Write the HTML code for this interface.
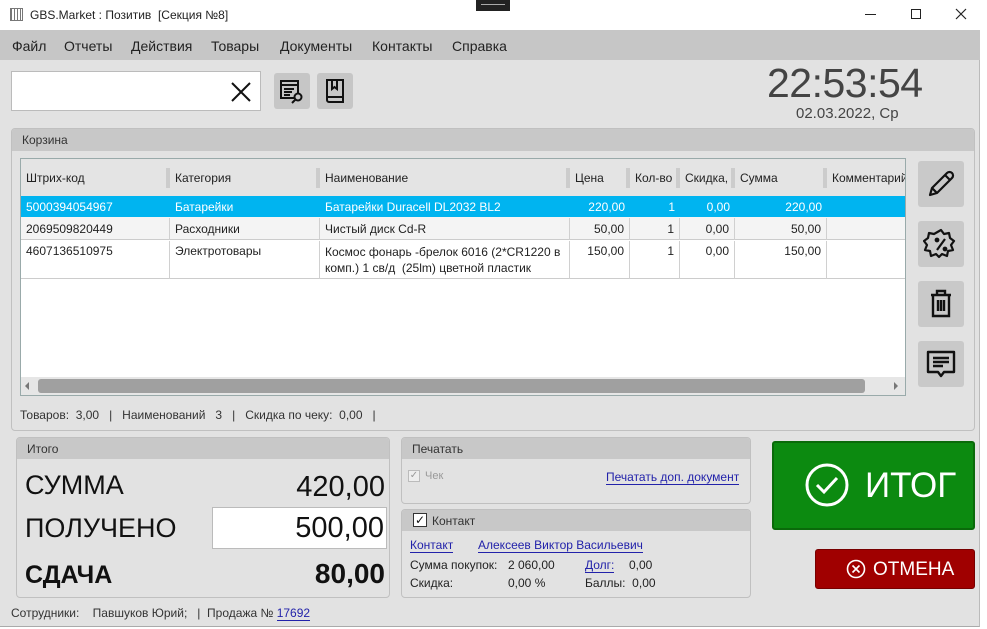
<!DOCTYPE html>
<html><head><meta charset="utf-8"><style>
*{margin:0;padding:0;box-sizing:border-box}
body{width:987px;height:629px;overflow:hidden;background:#fff;font-family:"Liberation Sans","DejaVu Sans",sans-serif;font-size:12px;color:#222;position:relative}
.a{position:absolute}
.t{white-space:nowrap}
.hdr{background:#c8c8c8;border-radius:3px 3px 0 0;padding:4px 10px;font-size:12px;color:#333}
.grp{background:#e2e2e2;border:1px solid #c0c0c0;border-radius:4px}
.cell{position:absolute;border-right:1px solid #d0d0d0;padding:3px 5px;white-space:nowrap;overflow:hidden}
.sbtn{position:absolute;left:918px;width:46px;height:46px;background:#c9c9c9;border-radius:3px}
.lnk{color:#2222aa;text-decoration:none;border-bottom:1px solid #2222aa}
.m{position:absolute;top:38px;font-size:14px;color:#222;white-space:nowrap}
</style></head><body>
<div class="a" style="left:0;top:0;width:987px;height:30px;background:#fff"></div>
<div class="a" style="left:10px;top:8px;width:13px;height:13px;border:1px solid #777;background:repeating-linear-gradient(90deg,#777 0 1px,#fff 1px 3px)"></div>
<div class="a t" style="left:30px;top:8px;font-size:12px;color:#222">GBS.Market : Позитив &nbsp;[Секция №8]</div>
<div class="a" style="left:476px;top:0;width:34px;height:11px;background:#222"></div>
<div class="a" style="left:481px;top:4px;width:24px;height:1px;background:#aaa"></div>
<div class="a" style="left:865px;top:14px;width:11px;height:1px;background:#222"></div>
<div class="a" style="left:911px;top:9px;width:10px;height:10px;border:1px solid #222"></div>
<svg class="a" style="left:955px;top:8px" width="12" height="12"><path d="M1 1L11 11M11 1L1 11" stroke="#222" stroke-width="1.2"/></svg>
<div class="a" style="left:0;top:30px;width:980px;height:30px;background:#c6c6c6"></div>
<div class="m" style="left:12px">Файл</div>
<div class="m" style="left:64px">Отчеты</div>
<div class="m" style="left:131px">Действия</div>
<div class="m" style="left:211px">Товары</div>
<div class="m" style="left:280px">Документы</div>
<div class="m" style="left:372px">Контакты</div>
<div class="m" style="left:452px">Справка</div>
<div class="a" style="left:0;top:60px;width:980px;height:567px;background:#e2e2e2;border-right:1px solid #bbb;border-bottom:1px solid #aaa"></div>
<div class="a" style="left:11px;top:71px;width:250px;height:40px;background:#fff;border:1px solid #bbb"></div>
<svg class="a" style="left:229px;top:80px" width="24" height="24"><path d="M3 3L21 21M21 3L3 21" stroke="#111" stroke-width="2"/></svg>
<div class="a" style="left:274px;top:73px;width:36px;height:36px;background:#c6c6c6;border-radius:3px"></div>
<svg class="a" style="left:278px;top:77px" width="28" height="28" fill="none" stroke="#111" stroke-width="2"><rect x="3" y="4" width="17" height="17"/><path d="M3 8h17M6 12h10M6 15h8M6 18h6"/><circle cx="20" cy="20" r="3.5" fill="#c6c6c6"/><path d="M17.5 22.5L14 26"/></svg>
<div class="a" style="left:317px;top:73px;width:36px;height:36px;background:#c6c6c6;border-radius:3px"></div>
<svg class="a" style="left:321px;top:77px" width="28" height="28" fill="none" stroke="#111" stroke-width="2"><path d="M6 3h16v22H8a2 2 0 0 1-2-2z"/><path d="M6 20h16M11 3v9l2.5-2 2.5 2V3"/></svg>
<div class="a t" style="left:767px;top:60px;font-size:41px;color:#444;letter-spacing:-0.5px">22:53:54</div>
<div class="a t" style="left:796px;top:105px;font-size:15px;color:#444">02.03.2022, Ср</div>
<div class="a grp" style="left:11px;top:128px;width:964px;height:303px"></div>
<div class="a hdr" style="left:12px;top:129px;width:962px;height:22px">Корзина</div>
<div class="a" style="left:20px;top:158px;width:886px;height:238px;background:#fff;border:1px solid #9aa;"></div>
<div class="a" style="left:21px;top:159px;width:884px;height:37px;background:#e4e4e4"></div>
<div class="a" style="left:21px;top:196px;width:884px;height:21px;background:#00b4f0"></div>
<div class="a" style="left:21px;top:217px;width:884px;height:23px;background:#f4f4f4;border-bottom:1px solid #ccc"></div>
<div class="a" style="left:21px;top:240px;width:884px;height:39px;border-bottom:1px solid #ccc"></div>
<div class="cell" style="left:21px;top:168px;width:149px;border-right:4px solid #ccc">Штрих-код</div>
<div class="cell" style="left:170px;top:168px;width:150px;border-right:4px solid #ccc">Категория</div>
<div class="cell" style="left:320px;top:168px;width:250px;border-right:4px solid #ccc">Наименование</div>
<div class="cell" style="left:570px;top:168px;width:60px;border-right:4px solid #ccc">Цена</div>
<div class="cell" style="left:630px;top:168px;width:50px;border-right:4px solid #ccc">Кол-во</div>
<div class="cell" style="left:680px;top:168px;width:55px;border-right:4px solid #ccc">Скидка,</div>
<div class="cell" style="left:735px;top:168px;width:92px;border-right:4px solid #ccc">Сумма</div>
<div class="cell" style="left:827px;top:168px;width:78px;border:none">Комментарий</div>
<div style="color:#fff">
<div class="cell" style="left:21px;top:197px;width:149px;border:none">5000394054967</div>
<div class="cell" style="left:170px;top:197px;width:150px;border:none">Батарейки</div>
<div class="cell" style="left:320px;top:197px;width:250px;border:none">Батарейки Duracell DL2032 BL2</div>
<div class="cell" style="left:570px;top:197px;width:60px;border:none;text-align:right">220,00</div>
<div class="cell" style="left:630px;top:197px;width:50px;border:none;text-align:right">1</div>
<div class="cell" style="left:680px;top:197px;width:55px;border:none;text-align:right">0,00</div>
<div class="cell" style="left:735px;top:197px;width:92px;border:none;text-align:right">220,00</div>
</div>
<div class="cell" style="left:21px;top:218px;width:149px;height:22px;padding-top:4px">2069509820449</div>
<div class="cell" style="left:170px;top:218px;width:150px;height:22px;padding-top:4px">Расходники</div>
<div class="cell" style="left:320px;top:218px;width:250px;height:22px;padding-top:4px">Чистый диск Cd-R</div>
<div class="cell" style="left:570px;top:218px;width:60px;height:22px;padding-top:4px;text-align:right">50,00</div>
<div class="cell" style="left:630px;top:218px;width:50px;height:22px;padding-top:4px;text-align:right">1</div>
<div class="cell" style="left:680px;top:218px;width:55px;height:22px;padding-top:4px;text-align:right">0,00</div>
<div class="cell" style="left:735px;top:218px;width:92px;height:22px;padding-top:4px;text-align:right">50,00</div>
<div class="cell" style="left:21px;top:241px;width:149px;height:38px">4607136510975</div>
<div class="cell" style="left:170px;top:241px;width:150px;height:38px">Электротовары</div>
<div class="cell" style="left:320px;top:241px;width:250px;height:38px;white-space:normal;line-height:16px;padding-top:3px">Космос фонарь -брелок 6016 (2*CR1220 в комп.) 1 св/д &nbsp;(25lm) цветной пластик</div>
<div class="cell" style="left:570px;top:241px;width:60px;height:38px;text-align:right">150,00</div>
<div class="cell" style="left:630px;top:241px;width:50px;height:38px;text-align:right">1</div>
<div class="cell" style="left:680px;top:241px;width:55px;height:38px;text-align:right">0,00</div>
<div class="cell" style="left:735px;top:241px;width:92px;height:38px;text-align:right">150,00</div>
<div class="a" style="left:21px;top:377px;width:884px;height:18px;background:#e6e6e6"></div>
<div class="a" style="left:38px;top:379px;width:827px;height:14px;background:#a0a0a0;border-radius:3px"></div>
<div class="a" style="left:25px;top:382px;width:0;height:0;border:4px solid transparent;border-right-color:#777;border-left:none"></div>
<div class="a" style="left:894px;top:382px;width:0;height:0;border:4px solid transparent;border-left-color:#777;border-right:none"></div>
<div class="a t" style="left:20px;top:408px;font-size:12px;color:#333">Товаров:&nbsp; 3,00 &nbsp; | &nbsp; Наименований &nbsp; 3 &nbsp; | &nbsp; Скидка по чеку: &nbsp;0,00 &nbsp; |</div>
<div class="sbtn" style="top:161px"></div>
<svg class="a" style="left:923px;top:166px" width="36" height="36" fill="none" stroke="#111" stroke-width="2.2" stroke-linejoin="round"><path d="M7 29l2-7L24 7a3 3 0 0 1 5 5L14 27z M22 9l5 5 M9 22l5 5"/></svg>
<div class="sbtn" style="top:221px"></div>
<svg class="a" style="left:923px;top:226px" width="36" height="36" fill="none" stroke="#111" stroke-width="2.2" stroke-linejoin="round"><path d="M18 4l3 4 5-1 1 5 4 3-3 4 2 5-5 1-1 5-5-2-3 3-3-3-5 2-1-5-5-1 2-5-3-4 4-3 1-5 5 1z"/><path d="M22 13l-8 11"/><circle cx="14" cy="14" r="1.3" fill="#111"/><circle cx="22" cy="23" r="1.3" fill="#111"/></svg>
<div class="sbtn" style="top:281px"></div>
<svg class="a" style="left:923px;top:286px" width="36" height="36" fill="none" stroke="#111" stroke-width="2.4"><path d="M8 9h20M14 9V5h8v4M10 9v21h16V9M15 14v11M18 14v11M21 14v11"/></svg>
<div class="sbtn" style="top:341px"></div>
<svg class="a" style="left:923px;top:346px" width="36" height="36" fill="none" stroke="#111" stroke-width="2.4" stroke-linejoin="round"><path d="M5 6h26v20H21l-3 4-3-4H5z M10 12h16M10 16h16M10 20h10"/></svg>
<div class="a grp" style="left:16px;top:437px;width:374px;height:161px"></div>
<div class="a hdr" style="left:17px;top:438px;width:372px;height:21px">Итого</div>
<div class="a t" style="left:25px;top:470px;font-size:27px;color:#111">СУММА</div>
<div class="a t" style="left:250px;top:471px;width:135px;text-align:right;font-size:29px;color:#111">420,00</div>
<div class="a t" style="left:25px;top:513px;font-size:27px;color:#111">ПОЛУЧЕНО</div>
<div class="a" style="left:212px;top:507px;width:175px;height:42px;background:#fff;border:1px solid #bbb"></div>
<div class="a t" style="left:250px;top:512px;width:134px;text-align:right;font-size:29px;color:#111">500,00</div>
<div class="a t" style="left:25px;top:561px;font-size:25px;font-weight:bold;color:#111">СДАЧА</div>
<div class="a t" style="left:250px;top:558px;width:135px;text-align:right;font-size:28px;font-weight:bold;color:#111">80,00</div>
<div class="a t" style="left:11px;top:606px;font-size:12px;color:#333">Сотрудники: &nbsp;&nbsp; Павшуков Юрий; &nbsp;&nbsp;| &nbsp;Продажа № <span class="lnk">17692</span></div>
<div class="a grp" style="left:401px;top:437px;width:350px;height:67px"></div>
<div class="a hdr" style="left:402px;top:438px;width:348px;height:21px">Печатать</div>
<div class="a" style="left:408px;top:470px;width:12px;height:12px;border:1px solid #bbb;background:#eee;color:#999;font-size:10px;line-height:10px;text-align:center">✓</div>
<div class="a t" style="left:425px;top:470px;color:#999;font-size:11px">Чек</div>
<div class="a t" style="left:606px;top:470px;font-size:12px"><span class="lnk">Печатать доп. документ</span></div>
<div class="a grp" style="left:401px;top:509px;width:350px;height:89px"></div>
<div class="a hdr" style="left:402px;top:510px;width:348px;height:21px;padding-left:30px">Контакт</div>
<div class="a" style="left:413px;top:513px;width:14px;height:14px;border:1px solid #333;background:#fff;font-size:12px;line-height:12px;text-align:center;color:#111">✓</div>
<div class="a t" style="left:410px;top:538px"><span class="lnk">Контакт</span></div>
<div class="a t" style="left:478px;top:538px"><span class="lnk">Алексеев Виктор Васильевич</span></div>
<div class="a t" style="left:410px;top:558px;color:#222">Сумма покупок:</div>
<div class="a t" style="left:508px;top:558px;color:#222">2 060,00</div>
<div class="a t" style="left:585px;top:558px"><span class="lnk">Долг:</span></div>
<div class="a t" style="left:629px;top:558px">0,00</div>
<div class="a t" style="left:410px;top:576px">Скидка:</div>
<div class="a t" style="left:508px;top:576px">0,00 %</div>
<div class="a t" style="left:585px;top:576px">Баллы:&nbsp; 0,00</div>
<div class="a" style="left:772px;top:441px;width:203px;height:89px;background:#0c8a10;border:2px solid #0a6a0a;border-radius:3px"></div>
<svg class="a" style="left:804px;top:462px" width="46" height="46" fill="none" stroke="#fff" stroke-width="3"><circle cx="23" cy="23" r="20"/><path d="M13 23l7 7 13-14"/></svg>
<div class="a t" style="left:865px;top:466px;font-size:35px;color:#fff">ИТОГ</div>
<div class="a" style="left:815px;top:549px;width:160px;height:40px;background:#a00000;border:1px solid #700;border-radius:3px"></div>
<svg class="a" style="left:846px;top:559px" width="20" height="20" fill="none" stroke="#fff" stroke-width="1.6"><circle cx="10" cy="10" r="8.5"/><path d="M6.5 6.5l7 7M13.5 6.5l-7 7"/></svg>
<div class="a t" style="left:873px;top:559px;font-size:19px;color:#fff">ОТМЕНА</div>
</body></html>
